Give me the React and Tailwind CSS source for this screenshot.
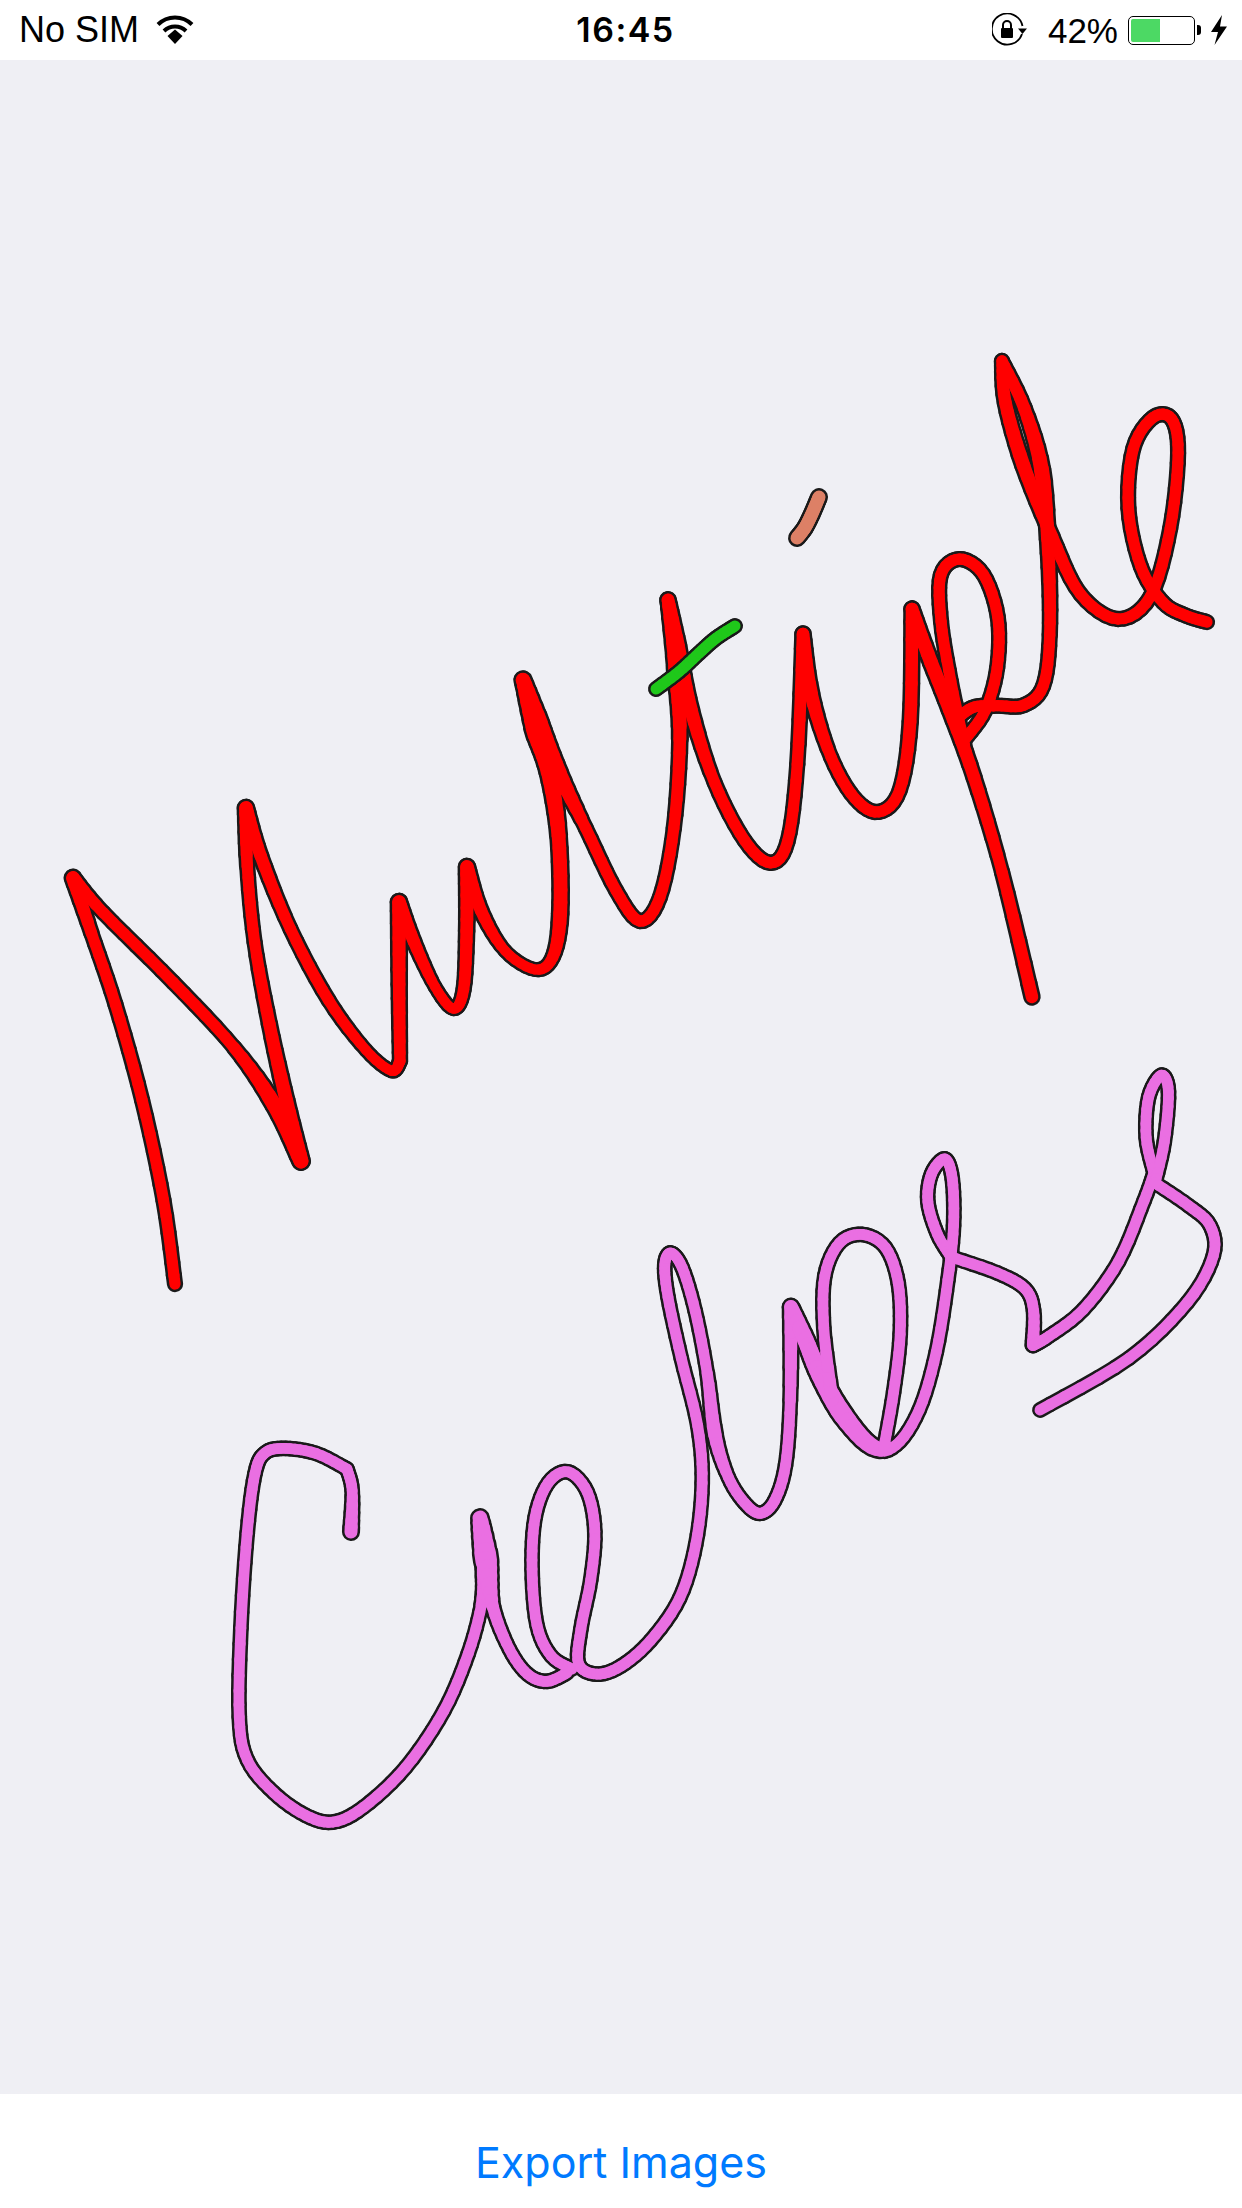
// handwriting strokes, points are [x, y, width?] in page pixels
const RED = [
  [[175, 1284], [166, 1205], [143, 1099], [115, 999], [90, 930], [73, 878, 11]],
  [[73, 878, 11], [91, 902, 9], [178, 986, 9], [238, 1049, 9], [277, 1105, 12], [301, 1161, 12]],
  [[301, 1161, 12], [287, 1105, 11], [269, 1024, 10], [253, 942, 9], [246, 861, 9], [246, 808, 11]],
  [[246, 808, 11], [257, 849, 10], [289, 930, 9], [329, 1005, 9], [368, 1055, 8], [396, 1078, 8], [400, 1061, 9]],
  [[400, 1061, 9], [399, 986, 10], [399, 902, 11]],
  [[399, 902, 11], [412, 939, 10], [436, 992, 8], [455, 1016, 8], [465, 999, 9], [467, 930, 10], [467, 867, 11]],
  [[467, 867, 11], [479, 911, 10], [503, 955, 8], [539, 976, 8], [554, 961, 9], [562, 924, 11], [560, 830, 11], [550, 767, 13], [535, 730, 16], [523, 680, 11]],
  [[523, 680, 11], [538, 723, 15], [557, 772, 13], [585, 825, 9], [618, 897, 9], [640, 932, 9], [661, 906, 9], [675, 834, 9], [682, 732, 10], [677, 669, 13], [668, 600, 10]],
  [[668, 600, 10], [677, 642, 12], [689, 709, 11], [713, 785, 9], [746, 848, 9], [772, 870, 9], [789, 852, 9], [798, 776, 9], [803, 634, 10]],
  [[803, 634, 10], [808, 692, 11], [831, 763, 9], [855, 803, 9], [879, 818, 9], [902, 799, 9], [912, 732, 10], [912, 609, 10]],
  [[912, 609, 10], [926, 651, 11], [950, 709, 11], [973, 772, 10], [1002, 866, 9], [1032, 997, 10]],
  [[964, 745, 10], [950, 680, 9], [940, 620, 9], [936, 568, 9], [959, 554, 9], [985, 568, 9], [1001, 616, 9], [999, 669, 9], [987, 714, 9], [966, 738, 9]],
  [[960, 716, 9], [972, 705, 9], [997, 705, 9], [1025, 709, 9], [1046, 692, 9], [1051, 642, 9], [1049, 553, 10], [1044, 464, 12], [1025, 406, 10], [1002, 361, 9]],
  [[1002, 361, 9], [1002, 397, 10], [1021, 464, 11], [1054, 540, 10], [1077, 600, 9], [1120, 628, 9], [1153, 606, 9], [1172, 531, 9], [1181, 442, 9], [1174, 414, 9], [1153, 412, 9], [1130, 442, 9], [1125, 509, 9], [1139, 571, 9], [1163, 607, 9], [1186, 616, 9], [1207, 622, 9]],
];

const GREEN = [[[656, 689], [680, 672], [700, 652], [715, 638], [735, 626]]];
const SALMON = [[[797, 538], [805, 529], [812, 514], [819, 497]]];

const PINK = [
  [[351, 1532, 10], [354, 1485], [347, 1469]],
  [[347, 1469], [317, 1451], [283, 1447], [263, 1451], [255, 1465], [247, 1526], [240, 1628], [238, 1730], [243, 1759], [273, 1795], [307, 1818], [333, 1826], [360, 1812], [407, 1771], [447, 1710], [470, 1653], [483, 1600], [487, 1575, 12], [480, 1518, 10]],
  [[480, 1518, 10], [487, 1560, 16], [490, 1608, 9], [510, 1653], [527, 1677], [547, 1685], [567, 1673]],
  [[572, 1669], [550, 1659], [535, 1632], [531, 1567], [533, 1514], [547, 1479], [568, 1465], [590, 1489], [597, 1530], [592, 1579], [580, 1632], [573, 1669], [597, 1677], [620, 1669], [650, 1644], [683, 1600], [697, 1547], [704, 1480], [701, 1430], [680, 1357], [666, 1290], [663, 1262], [670, 1248], [682, 1262], [695, 1307], [709, 1373], [713, 1440, 10], [728, 1480], [745, 1505], [760, 1518], [775, 1505], [787, 1470], [791, 1407], [791, 1307, 10]],
  [[791, 1307, 10], [806, 1340, 12], [818, 1373, 13], [842, 1417, 14], [874, 1453, 12], [895, 1452], [921, 1413], [937, 1357], [949, 1273], [955, 1227], [953, 1173], [947, 1151], [929, 1173], [925, 1200], [937, 1237], [951, 1257]],
  [[832, 1400, 10], [822, 1323], [822, 1273], [838, 1238], [862, 1231], [888, 1243], [900, 1280], [902, 1333], [894, 1393], [884, 1447]],
  [[951, 1257], [1001, 1273], [1029, 1288], [1035, 1307], [1033, 1345, 9]],
  [[1033, 1345, 9], [1044, 1340], [1084, 1313], [1120, 1267], [1148, 1190], [1154, 1173]],
  [[1154, 1173], [1144, 1140], [1146, 1093], [1163, 1068], [1171, 1083], [1165, 1147], [1155, 1183]],
  [[1155, 1183], [1191, 1207], [1213, 1223], [1219, 1253], [1193, 1300], [1136, 1360], [1040, 1410]],
];

// take the jitter out of the hand-read points, the ends stay put
function relax(points) {
  return points.map((p, i) => {
    if (i === 0 || i === points.length - 1) return p;
    const a = points[i - 1];
    const b = points[i + 1];
    return [0.18 * a[0] + 0.64 * p[0] + 0.18 * b[0], 0.18 * a[1] + 0.64 * p[1] + 0.18 * b[1], p[2]];
  });
}

// catmull-rom sampling so a handful of points reads as a pen line
function sample(raw, base) {
  const points = relax(raw);
  const out = [];
  const at = (i) => points[Math.max(0, Math.min(points.length - 1, i))];
  for (let i = 0; i < points.length - 1; i++) {
    const [p0, p1, p2, p3] = [at(i - 1), at(i), at(i + 1), at(i + 2)];
    for (let s = 0; s < 6; s++) {
      const t = s / 6;
      const t2 = t * t;
      const t3 = t2 * t;
      const c = (k) =>
        0.5 * (2 * p1[k] + (p2[k] - p0[k]) * t + (2 * p0[k] - 5 * p1[k] + 4 * p2[k] - p3[k]) * t2 + (3 * p1[k] - p0[k] - 3 * p2[k] + p3[k]) * t3);
      const w1 = p1[2] ?? base;
      const w2 = p2[2] ?? base;
      out.push([c(0), c(1), w1 + (w2 - w1) * t]);
    }
  }
  const last = points[points.length - 1];
  out.push([last[0], last[1], last[2] ?? base]);
  return out;
}

function Ink({ strokes, color, base, scale = 1 }) {
  const sampled = strokes.map((s) => sample(s, base));
  const pass = (stroke, extra, key) =>
    sampled.flatMap((line, i) =>
      line.slice(1).map((p, j) => (
        <line
          key={`${key}-${i}-${j}`}
          x1={line[j][0]}
          y1={line[j][1]}
          x2={p[0]}
          y2={p[1]}
          stroke={stroke}
          strokeWidth={p[2] * scale + extra}
          strokeLinecap="round"
        />
      )),
    );
  return (
    <g>
      {pass('#1a1a1a', 5, 'edge')}
      {pass(color, 0, 'fill')}
    </g>
  );
}

function WifiIcon() {
  return (
    <svg width="38" height="30" viewBox="0 0 38 30" className="ml-[17px]">
      <path d="M2 9.5 A 24 24 0 0 1 36 9.5" fill="none" stroke="#000" strokeWidth="4" />
      <path d="M8 16 A 16 16 0 0 1 30 16" fill="none" stroke="#000" strokeWidth="4" />
      <path d="M11.5 21 L19 14.5 L26.5 21 L19 29 Z" fill="#000" />
    </svg>
  );
}

function RotationLockIcon() {
  return (
    <svg width="36" height="34" viewBox="0 0 36 34">
      <path d="M30 21 A 15.5 15.5 0 1 1 30.5 13" fill="none" stroke="#000" strokeWidth="1.8" />
      <path d="M26 15.5 H35 L30.5 21 Z" fill="#000" />
      <rect x="9" y="15" width="12" height="10" rx="1" fill="#000" />
      <path d="M11 15 V12 A 4 4 0 0 1 19 12 V15" fill="none" stroke="#000" strokeWidth="2" />
    </svg>
  );
}

function BatteryIcon() {
  return (
    <div className="flex items-center">
      <div className="h-[29px] w-[67px] rounded-[5px] border border-black p-[2px] flex">
        <div className="h-full w-[29px] bg-[#4cd964] rounded-l-[2px]" />
      </div>
      <div className="ml-[2px] h-[10px] w-[4px] bg-black rounded-r-[3px]" />
    </div>
  );
}

function BoltIcon() {
  return (
    <svg width="16" height="30" viewBox="0 0 16 30">
      <path d="M11 0 L0 17 H7 L3.5 30 L16 11.5 H9 Z" fill="#000" />
    </svg>
  );
}

export default function App() {
  return (
    <div className="flex flex-col w-[1242px] h-[2208px] bg-white font-['Liberation_Sans',Arial,sans-serif]">
      <div className="grid grid-cols-3 items-center h-[60px] pl-[19px] pr-[20px] text-black text-[35px] leading-none">
        <div className="flex items-center">
          <span className="text-[36px]">No SIM</span>
          <WifiIcon />
        </div>
        <div className="text-center pl-[10px] font-['Inter',sans-serif] font-semibold text-[34px] tracking-[1.5px]">16:45</div>
        <div className="flex items-center justify-end">
          <RotationLockIcon />
          <span className="ml-[20px]">42%</span>
          <span className="ml-[10px]"><BatteryIcon /></span>
          <span className="ml-[10px] mr-[-5px]"><BoltIcon /></span>
        </div>
      </div>

      <div className="flex-1 bg-[#efeff4] overflow-hidden">
        <svg viewBox="0 60 1242 2034" className="block w-full h-full blur-[0.6px]">
          <Ink strokes={RED} color="#ff0000" base={9} scale={1.25} />
          <Ink strokes={GREEN} color="#1fc81a" base={11} />
          <Ink strokes={SALMON} color="#dd8066" base={13} />
          <Ink strokes={PINK} color="#ea6fe2" base={8} scale={1.35} />
        </svg>
      </div>

      <div className="h-[114px] pt-[22px] flex items-center justify-center bg-white">
        <span className="font-['Inter',sans-serif] text-[#007aff] text-[43px] leading-none">Export Images</span>
      </div>
    </div>
  );
}
